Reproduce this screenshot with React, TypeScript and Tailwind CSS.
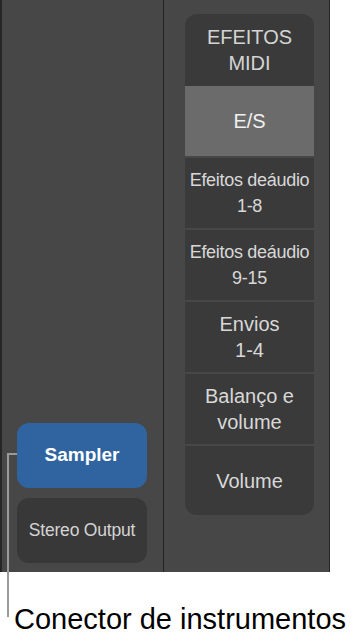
export default function App() {
  const sections = [
    { lines: ["Efeitos deáudio", "1-8"], tight: true },
    { lines: ["Efeitos deáudio", "9-15"], tight: true },
    { lines: ["Envios", "1-4"], tight: false },
    { lines: ["Balanço e", "volume"], tight: false },
  ];

  return (
    <div className="relative w-[356px] h-[638px] bg-white overflow-hidden font-['Liberation_Sans',Arial,sans-serif]">
      {/* Mixer panel */}
      <div className="flex w-[330px] h-[572px] bg-[#474747] border-l-2 border-r border-[#262626]">
        {/* Instrument column */}
        <div className="w-[161px] flex flex-col justify-end gap-[10px] pl-[15px] pb-[9px]">
          <div className="w-[130px] h-[65px] rounded-xl bg-[#2f64a0] flex items-center justify-center text-[19px] font-semibold text-white">
            Sampler
          </div>
          <div className="w-[130px] h-[65px] rounded-xl bg-[#383838] flex items-center justify-center text-[17.5px] tracking-[-0.2px] text-[#d4d4d4]">
            Stereo Output
          </div>
        </div>

        <div className="w-px bg-[#222]" />

        {/* Strip sections */}
        <div className="flex-1 pl-[21px] pt-[14px]">
          <div className="w-[129px] flex flex-col gap-[2px] rounded-xl overflow-hidden">
            <div className="flex flex-col">
              <div className="h-[72px] bg-[#3a3a3a] flex flex-col items-center justify-center text-[20px] leading-[26px] text-[#d4d4d4]">
                <span>EFEITOS</span>
                <span>MIDI</span>
              </div>
              <div className="h-[70px] bg-[#6b6b6b] flex items-center justify-center text-[20px] text-[#f0f0f0]">
                E/S
              </div>
            </div>
            {sections.map((s) => (
              <div
                key={s.lines.join("-")}
                className={
                  s.tight
                    ? "h-[70px] bg-[#3a3a3a] flex flex-col items-center justify-center text-[18px] leading-[26px] tracking-[-0.3px] text-[#d8d8d8]"
                    : "h-[70px] bg-[#3a3a3a] flex flex-col items-center justify-center text-[20px] leading-[26px] text-[#d8d8d8]"
                }
              >
                {s.lines.map((l) => (
                  <span key={l}>{l}</span>
                ))}
              </div>
            ))}
            <div className="h-[69px] bg-[#3a3a3a] flex items-center justify-center text-[20px] text-[#d8d8d8]">
              Volume
            </div>
          </div>
        </div>
      </div>

      {/* Callout line */}
      <div className="absolute left-[7px] top-[453px] w-[10px] h-[164px] border-l-2 border-t-2 border-[#9a9a9a]" />

      {/* Caption */}
      <div className="pl-[14px] pt-[33px] text-[29px] leading-[29px] text-black whitespace-nowrap">
        Conector de instrumentos
      </div>
    </div>
  );
}
